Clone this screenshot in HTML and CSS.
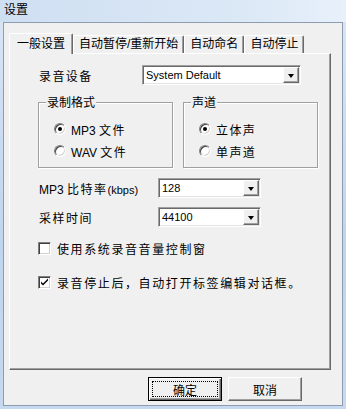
FILE: index.html
```html
<!DOCTYPE html>
<html lang="zh-CN">
<head>
<meta charset="UTF-8" />
<title>设置</title>
<link rel="stylesheet" href="styles.css">
</head>
<body>

<div class="window">
  <div class="titlebar">设置</div>

  <div class="client">
    <div class="tabs">
      <span class="tab active">一般设置</span>
      <span class="tab">自动暂停/重新开始</span>
      <span class="tab">自动命名</span>
      <span class="tab">自动停止</span>
    </div>

    <div class="panel">
      <div class="row">
        <span class="label label-device">录音设备</span>
        <div class="select select-device">
          <span class="value">System Default</span>
          <span class="arrow"></span>
        </div>
      </div>

      <div class="groups">
        <div class="group">
          <span class="group-title">录制格式</span>
          <div class="radio-row"><span class="radio checked"></span><span class="option"><span class="latin">MP3 </span>文件</span></div>
          <div class="radio-row"><span class="radio"></span><span class="option"><span class="latin">WAV </span>文件</span></div>
        </div>
        <div class="group">
          <span class="group-title">声道</span>
          <div class="radio-row"><span class="radio checked"></span><span class="option">立体声</span></div>
          <div class="radio-row"><span class="radio"></span><span class="option">单声道</span></div>
        </div>
      </div>

      <div class="row row-bitrate">
        <span class="label label-wide"><span class="latin">MP3 </span>比特率<small>(kbps)</small></span>
        <div class="select select-short">
          <span class="value">128</span>
          <span class="arrow"></span>
        </div>
      </div>

      <div class="row row-rate">
        <span class="label label-wide">采样时间</span>
        <div class="select select-short">
          <span class="value">44100</span>
          <span class="arrow"></span>
        </div>
      </div>

      <div class="check-row check-first">
        <span class="checkbox"></span>
        <span class="option">使用系统录音音量控制窗</span>
      </div>

      <div class="check-row check-second">
        <span class="checkbox">
          <svg width="9" height="9" viewBox="0 0 9 9"><path d="M1 3.5v2l2 2 5-5v-2l-5 5z" fill="#000"/></svg>
        </span>
        <span class="option">录音停止后，自动打开标签编辑对话框。</span>
      </div>
    </div>

    <div class="buttons">
      <button class="btn btn-default"><span class="focus">确定</span></button>
      <button class="btn">取消</button>
    </div>
  </div>
</div>

</body>
</html>
```

FILE: styles.css
```css
* {
  box-sizing: border-box;
}
body {
  margin: 0;
  font-family: "Liberation Sans", "Noto Sans CJK SC", sans-serif;
  font-size: 12px;
  color: #000;
  background: #c9dbf0;
}

.window {
  width: 346px;
  height: 409px;
  display: flex;
  flex-direction: column;
  background: linear-gradient(to bottom, #d9e6f5, #bfd4ee 60%, #c6d9f0);
}

.titlebar {
  height: 22px;
  padding: 3px 0 0 4px;
  line-height: 14px;
  font-size: 12px;
  color: #000;
  background: linear-gradient(to right, #cfdff2, #dbe8f6 70%, #e8f0fa);
}

.client {
  flex: 1;
  margin: 0 3px 3px 3px;
  border: 1px solid #8d9cb0;
  background: #f0f0f0;
  display: flex;
  flex-direction: column;
}

/* tabs */
.tabs {
  display: flex;
  align-items: flex-end;
  margin-top: 10px;
  padding-left: 5px;
}
.tab {
  height: 18px;
  padding: 0 5px;
  line-height: 17px;
  white-space: nowrap;
  border-top: 1px solid #fff;
  border-left: 1px solid #fff;
  border-right: 1px solid #696969;
  border-radius: 2px 2px 0 0;
  box-shadow: inset -1px 0 0 #a0a0a0;
}
.tab.active {
  position: relative;
  z-index: 1;
  height: 21px;
  margin-bottom: -1px;
  padding: 0 7px;
  line-height: 20px;
  background: #f0f0f0;
}

.panel {
  height: 317px;
  margin: 0 11px 0 5px;
  padding: 11px 0 0 28px;
  border-top: 1px solid #fff;
  border-left: 1px solid #fff;
  border-right: 1px solid #696969;
  border-bottom: 1px solid #696969;
  box-shadow: inset -1px -1px 0 #a0a0a0;
}

.latin {
  letter-spacing: 0;
}

/* rows with a label and a dropdown */
.row {
  display: flex;
  align-items: center;
  height: 20px;
  padding-left: 1px;
}
.label {
  letter-spacing: 1.4px;
  flex-shrink: 0;
}
.label small {
  font-size: 11px;
  letter-spacing: 0;
}
.label-device {
  width: 103px;
}
.label-wide {
  width: 119px;
  letter-spacing: 1.5px;
}
.row-bitrate {
  margin-top: 10px;
}
.row-rate {
  margin-top: 9px;
}

.select {
  height: 20px;
  display: flex;
  align-items: center;
  background: #fff;
  border: 1px solid;
  border-color: #a0a0a0 #fff #fff #a0a0a0;
  box-shadow: inset 1px 1px 0 #696969, inset -1px -1px 0 #e3e3e3;
  padding: 1px 1px 1px 2px;
}
.select-device {
  width: 159px;
}
.select-short {
  width: 103px;
}
.select .value {
  flex: 1;
  font-size: 11px;
  padding-left: 1px;
  line-height: 14px;
}
.select .arrow {
  width: 16px;
  height: 16px;
  background: #f0f0f0;
  border: 1px solid;
  border-color: #fff #696969 #696969 #fff;
  box-shadow: inset -1px -1px 0 #a0a0a0;
  display: flex;
  align-items: center;
  justify-content: center;
}
.select .arrow::after {
  content: "";
  border-left: 3.5px solid transparent;
  border-right: 3.5px solid transparent;
  border-top: 4px solid #000;
  margin: 1px 1px 0 0;
}

/* group boxes */
.groups {
  display: flex;
  gap: 10px;
  margin-top: 17px;
}
.group {
  width: 135px;
  height: 66px;
  border: 1px solid #a0a0a0;
  box-shadow: inset 1px 1px 0 #fff, 1px 1px 0 #fff;
}
.group-title {
  display: block;
  width: fit-content;
  margin: -6px 0 0 7px;
  padding: 0 1px;
  line-height: 12px;
  background: #f0f0f0;
}
.radio-row {
  display: flex;
  align-items: center;
  height: 22px;
  padding-left: 15px;
}
.radio-row:first-of-type {
  margin-top: 9px;
}
.option {
  letter-spacing: 1.4px;
  white-space: nowrap;
}
.radio {
  width: 12px;
  height: 12px;
  margin-right: 5px;
  border-radius: 50%;
  background: #fff;
  border: 1px solid;
  border-color: #808080 #fff #fff #808080;
  box-shadow: inset 1px 1px 0 #404040, inset -1px -1px 0 #d4d0c8;
  display: flex;
  align-items: center;
  justify-content: center;
}
.radio.checked::after {
  content: "";
  width: 4px;
  height: 4px;
  border-radius: 50%;
  background: #000;
}

/* check boxes */
.check-row {
  display: flex;
  align-items: center;
  height: 20px;
}
.check-first {
  margin-top: 11px;
}
.check-second {
  margin-top: 14px;
}
.check-row .option {
  letter-spacing: 1.6px;
}
.checkbox {
  width: 13px;
  height: 13px;
  margin-right: 6px;
  background: #fff;
  border: 1px solid;
  border-color: #808080 #fff #fff #808080;
  box-shadow: inset 1px 1px 0 #404040, inset -1px -1px 0 #d4d0c8;
  display: flex;
  align-items: center;
  justify-content: center;
}
.checkbox svg {
  display: block;
}

/* dialog buttons */
.buttons {
  display: flex;
  justify-content: flex-end;
  gap: 6px;
  margin-top: 7px;
  padding-right: 40px;
}
.btn {
  width: 74px;
  height: 24px;
  padding: 0;
  font: inherit;
  color: #000;
  background: #f0f0f0;
  border: 1px solid;
  border-color: #fff #696969 #696969 #fff;
  box-shadow: inset -1px -1px 0 #a0a0a0;
}
.btn-default {
  border-color: #000;
  box-shadow: inset 1px 1px 0 #fff, inset -1px -1px 0 #696969, inset -2px -2px 0 #a0a0a0;
  padding: 3px;
}
.btn-default .focus {
  display: flex;
  align-items: center;
  justify-content: center;
  height: 100%;
  border: 1px dotted #000;
}
```
